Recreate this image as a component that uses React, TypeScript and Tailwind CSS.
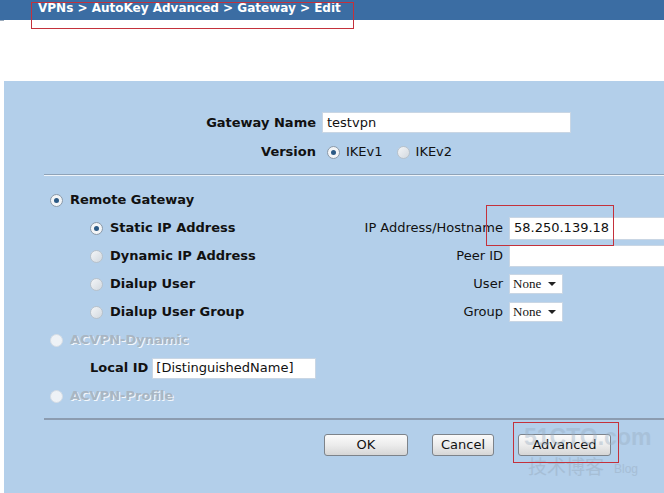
import React from 'react'

const font = { fontFamily: '"DejaVu Sans", Verdana, sans-serif' }

function Radio({ checked = false, disabled = false }: { checked?: boolean; disabled?: boolean }) {
  return (
    <span
      className={`flex h-[13px] w-[13px] shrink-0 items-center justify-center rounded-full border ${
        disabled
          ? 'border-[#d6dde5] bg-[#eef2f6]'
          : checked
          ? 'border-[#8a99a8] bg-[#f3f5f7]'
          : 'border-[#b9c2cb] bg-gradient-to-br from-[#f4f6f8] to-[#d3d9df]'
      }`}
    >
      {checked && <span className="h-[5px] w-[5px] rounded-full bg-[#2c5a85]" />}
    </span>
  )
}

function Select() {
  return (
    <div className="flex h-[20px] w-[54px] items-center justify-between border border-[#c9d6e4] bg-white pl-[3px] pr-[6px]">
      <span className="text-[13px] text-[#111]" style={{ fontFamily: '"Liberation Serif", serif' }}>
        None
      </span>
      <span className="h-0 w-0 border-x-[4px] border-t-[4px] border-x-transparent border-t-[#222]" />
    </div>
  )
}

function Btn({ label, w }: { label: string; w: string }) {
  return (
    <button
      className={`${w} h-[22px] rounded-[3px] border border-[#7d838a] bg-gradient-to-b from-[#fbfbfb] via-[#ececec] to-[#d6d6d6] text-[13px] text-[#111]`}
    >
      {label}
    </button>
  )
}

export default function App() {
  return (
    <div className="relative h-[493px] w-[664px] overflow-hidden bg-white text-[#111]" style={font}>
      {/* barra superior */}
      <div className="flex h-[20px] items-start bg-[#3b6da3] pl-[38px] pt-[2px] shadow-[0_1px_0_#9aaabb]">
        <span className="text-[12px] font-bold leading-none text-white">VPNs &gt; AutoKey Advanced &gt; Gateway &gt; Edit</span>
      </div>

      <div className="flex h-[473px]">
        <div className="ml-[1px] w-[2px] bg-[#d9d4cf]" />
        <div className="ml-[3px] flex flex-1 flex-col">
          <div className="h-[61px] bg-white" />
          <div className="flex flex-1 flex-col bg-[#b3cfea] pl-[2px]">
            {/* Gateway Name */}
            <div className="mt-[31px] flex h-[21px] items-center">
              <div className="w-[310px] text-right text-[13px] font-bold">Gateway Name</div>
              <div className="ml-[6px] flex h-[21px] w-[249px] items-center border border-[#c9d6e4] bg-white pl-[4px] text-[13px]">
                testvpn
              </div>
            </div>
            {/* Version */}
            <div className="mt-[9px] flex h-[20px] items-center">
              <div className="w-[310px] text-right text-[13px] font-bold">Version</div>
              <div className="ml-[11px] flex items-center gap-[6px] text-[13px]">
                <Radio checked />
                <span>IKEv1</span>
                <span className="ml-[2px]" />
                <Radio />
                <span>IKEv2</span>
              </div>
            </div>

            <div className="ml-[38px] mt-[12px] h-[2px] border-t border-b border-t-[#8fa3b8] border-b-[#eef4fa]" />

            <div className="mt-[10px] flex flex-col text-[13px]">
              <div className="flex h-[28px] items-center pl-[44px] gap-[7px] font-bold">
                <Radio checked />
                <span>Remote Gateway</span>
              </div>

              {[
                { l: 'Static IP Address', r: 'IP Address/Hostname', kind: 'ip', checked: true },
                { l: 'Dynamic IP Address', r: 'Peer ID', kind: 'peer', checked: false },
                { l: 'Dialup User', r: 'User', kind: 'sel', checked: false },
                { l: 'Dialup User Group', r: 'Group', kind: 'sel', checked: false },
              ].map((row) => (
                <div key={row.l} className="flex h-[28px] items-center">
                  <div className="flex w-[340px] items-center gap-[7px] pl-[84px] font-bold">
                    <Radio checked={row.checked} />
                    <span>{row.l}</span>
                  </div>
                  <div className="w-[157px] text-right">{row.r}</div>
                  <div className="ml-[6px]">
                    {row.kind === 'ip' && (
                      <div className="flex h-[23px] w-[170px] items-center border border-[#c9d6e4] bg-white pl-[4px]">58.250.139.18</div>
                    )}
                    {row.kind === 'peer' && <div className="h-[22px] w-[170px] border border-[#c9d6e4] bg-white" />}
                    {row.kind === 'sel' && <Select />}
                  </div>
                </div>
              ))}

              <div className="flex h-[28px] items-center gap-[7px] pl-[44px] font-bold text-[#a9b6c3] [text-shadow:1px_1px_0_#f4f8fc]">
                <Radio disabled />
                <span>ACVPN-Dynamic</span>
              </div>
              <div className="flex h-[28px] items-center pl-[84px]">
                <span className="font-bold">Local ID</span>
                <div className="ml-[4px] flex h-[21px] w-[164px] items-center border border-[#c9d6e4] bg-white pl-[3px]">[DistinguishedName]</div>
              </div>
              <div className="flex h-[28px] items-center gap-[7px] pl-[44px] font-bold text-[#a9b6c3] [text-shadow:1px_1px_0_#f4f8fc]">
                <Radio disabled />
                <span>ACVPN-Profile</span>
              </div>
            </div>

            <div className="ml-[38px] mt-[8px] h-[2px] bg-[#8c9cb0]" />

            <div className="mt-[14px] flex items-center pl-[318px]">
              <Btn label="OK" w="w-[84px]" />
              <div className="ml-[24px]" />
              <Btn label="Cancel" w="w-[62px]" />
              <div className="ml-[24px]" />
              <Btn label="Advanced" w="w-[93px]" />
            </div>
          </div>
        </div>
      </div>

      {/* marca de agua */}
      <div className="pointer-events-none absolute left-[524px] top-[426px] text-[23px] font-bold leading-none text-[#9aaec2] opacity-40" style={{ fontFamily: '"Liberation Sans", sans-serif' }}>
        51CTO.com
      </div>
      <div className="pointer-events-none absolute left-[528px] top-[456px] flex items-end gap-[10px] leading-none text-[#9aaec2] opacity-50">
        <span className="text-[19px]" style={{ fontFamily: '"Noto Sans CJK SC", sans-serif' }}>技术博客</span>
        <span className="text-[12px]" style={{ fontFamily: '"Liberation Sans", sans-serif' }}>Blog</span>
      </div>

      {/* anotaciones rojas */}
      <div className="pointer-events-none absolute left-[31px] top-[2px] h-[27px] w-[323px] border border-[#c4313b]" />
      <div className="pointer-events-none absolute left-[486px] top-[205px] h-[41px] w-[128px] border border-[#c4313b]" />
      <div className="pointer-events-none absolute left-[513px] top-[422px] h-[41px] w-[106px] border border-[#c4313b]" />
    </div>
  )
}
